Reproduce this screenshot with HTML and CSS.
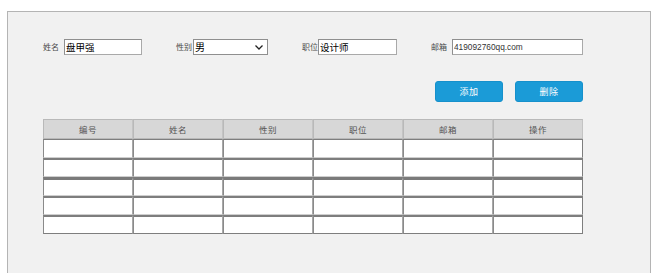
FILE: index.html
```html
<!DOCTYPE html>
<html lang="zh">
<head>
<meta charset="utf-8">
<link rel="stylesheet" href="styles.css">
</head>
<body>
<div class="panel">
  <div class="form-row">
    <div class="field">
      <span class="label gap-5">姓名</span>
      <input class="input w-name" type="text" value="盘甲强">
    </div>
    <div class="field">
      <span class="label gap-1">性别</span>
      <div class="select-wrap">
        <select class="select">
          <option>男</option>
          <option>女</option>
        </select>
        <svg class="chevron" width="8" height="5" viewBox="0 0 8 5"><path d="M0.5 0.5 L4 4 L7.5 0.5" fill="none" stroke="#222" stroke-width="1.3"/></svg>
      </div>
    </div>
    <div class="field">
      <span class="label gap-0">职位</span>
      <input class="input w-pos" type="text" value="设计师">
    </div>
    <div class="field">
      <span class="label gap-5">邮箱</span>
      <input class="input w-mail mail" type="text" value="419092760qq.com">
    </div>
  </div>
  <div class="actions">
    <button class="btn">添加</button>
    <button class="btn">删除</button>
  </div>
  <table class="grid">
    <thead>
      <tr><th>编号</th><th>姓名</th><th>性别</th><th>职位</th><th>邮箱</th><th>操作</th></tr>
    </thead>
    <tbody>
      <tr><td></td><td></td><td></td><td></td><td></td><td></td></tr>
      <tr><td></td><td></td><td></td><td></td><td></td><td></td></tr>
      <tr class="thick"><td></td><td></td><td></td><td></td><td></td><td></td></tr>
      <tr><td></td><td></td><td></td><td></td><td></td><td></td></tr>
      <tr><td></td><td></td><td></td><td></td><td></td><td></td></tr>
    </tbody>
  </table>
</div>
</body>
</html>
```
FILE: styles.css
```css
html, body {
  margin: 0;
  padding: 0;
  background: #ffffff;
  font-family: "Noto Sans CJK SC", "Liberation Sans", sans-serif;
  overflow: hidden;
}
.panel {
  margin: 11px 0 0 7px;
  height: 262px;
  border: 1px solid #b4b4b4;
  background: #f1f1f1;
  padding-left: 35px;
  width: 607px;
}
.form-row {
  display: flex;
  gap: 34px;
  margin-top: 27px;
  align-items: center;
}
.field {
  display: flex;
  align-items: center;
}
.label {
  width: 16px;
  font-size: 8px;
  color: #4a4a4a;
  line-height: 16px;
  white-space: nowrap;
}
.gap-5 { margin-right: 5px; }
.gap-1 { margin-right: 1px; }
.gap-0 { margin-right: 0; }
.input {
  box-sizing: border-box;
  height: 16px;
  border: 1px solid #a9a9a9;
  border-top-color: #8f8f8f;
  border-left-color: #8f8f8f;
  background: #fff;
  padding: 0 1px;
  margin: 0;
  font-family: "Noto Sans CJK SC", "Liberation Sans", sans-serif;
  font-size: 9.5px;
  color: #000;
  outline: none;
}
.w-name { width: 78px; }
.w-pos { width: 79px; }
.w-mail { width: 131px; }
.mail {
  font-family: "Liberation Sans", "Noto Sans CJK SC", sans-serif;
  font-size: 8.3px;
  color: #333;
}
.select-wrap {
  position: relative;
  display: flex;
  width: 75px;
  height: 16px;
}
.select {
  appearance: none;
  -webkit-appearance: none;
  box-sizing: border-box;
  width: 75px;
  height: 16px;
  margin: 0;
  padding: 0 1px;
  border: 1px solid #8f8f8f;
  border-radius: 0;
  background: #fff;
  font-family: "Noto Sans CJK SC", sans-serif;
  font-size: 10px;
  line-height: 14px;
  color: #000;
  outline: none;
}
.chevron {
  position: absolute;
  right: 5px;
  top: 6px;
  pointer-events: none;
}
.actions {
  display: flex;
  justify-content: flex-end;
  gap: 12px;
  margin-top: 26px;
  width: 540px;
}
.btn {
  box-sizing: border-box;
  width: 68px;
  height: 21px;
  border: 1px solid #1690cb;
  border-radius: 3px;
  background: #1b9bd7;
  color: #fff;
  font-family: "Noto Sans CJK SC", sans-serif;
  font-size: 9px;
  padding: 0;
  letter-spacing: 0.5px;
}
.grid {
  margin-top: 17px;
  width: 540px;
  border-collapse: separate;
  border-spacing: 0;
  table-layout: fixed;
}
.grid th {
  height: 20px;
  box-sizing: border-box;
  background: #d7d7d7;
  border: 1px solid #b9b9b9;
  border-right-color: #c4c4c4;
  font-weight: normal;
  font-size: 8.5px;
  color: #555;
  padding: 0;
  letter-spacing: 0.5px;
}
.grid td {
  height: 19px;
  box-sizing: border-box;
  background: #fff;
  border-top: 2px solid #7e7e7e;
  border-left: 1px solid #8a8a8a;
  border-right: 1px solid #a8a8a8;
  border-bottom: 1px solid #cfcfcf;
  padding: 0;
}
.grid tbody tr:first-child td {
  border-top-width: 1px;
}
.grid tr.thick td {
  border-top: 3px solid #7a7a7a;
}
.grid tbody tr:last-child td {
  border-bottom: 1px solid #7e7e7e;
}
.grid td:last-child {
  border-right: 1px solid #7e7e7e;
}
```
